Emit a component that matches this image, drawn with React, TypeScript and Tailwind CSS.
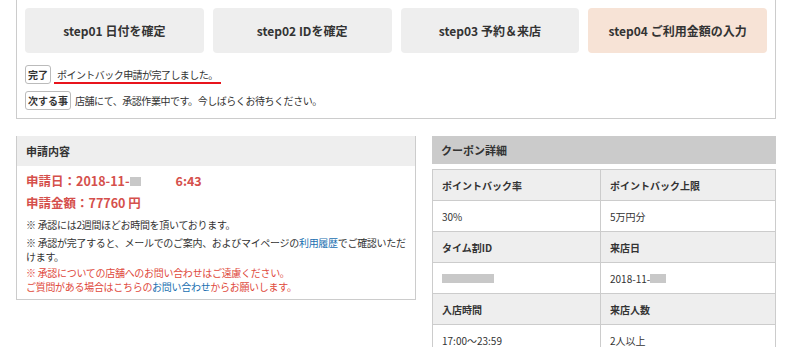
import React from 'react';

const steps = [
  { label: 'step01 日付を確定', active: false },
  { label: 'step02 IDを確定', active: false },
  { label: 'step03 予約＆来店', active: false },
  { label: 'step04 ご利用金額の入力', active: true },
];

const Redacted: React.FC<{ w: string }> = ({ w }) => (
  <span className={`inline-block h-[9px] bg-[#c8c8c8] align-middle ${w}`}></span>
);

const rows: { head: [string, string]; body: [React.ReactNode, React.ReactNode] }[] = [
  { head: ['ポイントバック率', 'ポイントバック上限'], body: ['30%', '5万円分'] },
  {
    head: ['タイム割ID', '来店日'],
    body: [
      <Redacted w="w-[52px]" />,
      <span className="flex items-center">
        2018-11-<Redacted w="w-[16px]" />
      </span>,
    ],
  },
  { head: ['入店時間', '来店人数'], body: ['17:00〜23:59', '2人以上'] },
];

export default function App() {
  return (
    <div
      className="w-[789px] h-[347px] overflow-hidden bg-white text-[#333]"
      style={{ fontFamily: '"Noto Sans CJK JP", "Noto Sans", sans-serif' }}
    >
      <div className="ml-4 w-[760px]">
        {/* Step box */}
        <div className="border-x border-b border-[#cccccc] pt-2 pb-2 px-2">
          <div className="grid grid-cols-4 gap-[9px]">
            {steps.map((s) => (
              <div
                key={s.label}
                className={`h-[45px] rounded-[4px] flex items-center justify-center text-[12px] font-bold ${
                  s.active ? 'bg-[#f7e3d6]' : 'bg-[#eeeeee]'
                }`}
              >
                {s.label}
              </div>
            ))}
          </div>

          <div className="mt-3 flex items-start h-[19px]">
            <span className="h-[19px] px-[2px] border border-[#bbbbbb] rounded-[3px] text-[10px] font-bold leading-[17px]">
              完了
            </span>
            <span className="ml-[3px] px-[3px] pt-[3px] leading-[14px] border-b-2 border-[#e8141c] text-[10px] tracking-[-0.55px]">
              ポイントバック申請が完了しました。
            </span>
          </div>

          <div className="mt-[7px] flex items-center h-[19px]">
            <span className="h-[19px] px-[2px] border border-[#bbbbbb] rounded-[3px] text-[10px] font-bold leading-[17px]">
              次する事
            </span>
            <span className="ml-1 text-[10px] tracking-[-0.45px] leading-[14px]">
              店舗にて、承認作業中です。今しばらくお待ちください。
            </span>
          </div>
        </div>

        {/* Lower panels */}
        <div className="mt-[17px] flex gap-4 items-start">
          {/* Application */}
          <div className="w-[400px] border-x border-b border-[#cccccc]">
            <div className="h-[30px] bg-[#eeeeee] flex items-center px-[9px] text-[11px] font-bold">
              申請内容
            </div>
            <div className="px-[9px] pt-[4px] pb-[5px]">
              <p className="leading-[22px] text-[12.5px] font-bold text-[#d5504c] flex items-center">
                申請日：2018-11-
                <Redacted w="w-[11px]" />
                <span className="ml-[35px]">6:43</span>
              </p>
              <p className="leading-[22px] text-[12.5px] font-bold text-[#d5504c]">申請金額：77760 円</p>
              <div className="text-[10px] leading-[14px] tracking-[-0.3px]">
                <p className="mt-1">※ 承認には2週間ほどお時間を頂いております。</p>
                <p className="mt-1">
                  <span className="block">
                    ※ 承認が完了すると、メールでのご案内、およびマイページの
                    <span className="text-[#1a6fb0]">利用履歴</span>でご確認いただ
                  </span>
                  <span className="block">けます。</span>
                </p>
                <p className="mt-[2px] text-[#e0493c]">
                  <span className="block">※ 承認についての店舗へのお問い合わせはご遠慮ください。</span>
                  <span className="block">
                    ご質問がある場合はこちらの<span className="text-[#1a6fb0]">お問い合わせ</span>からお願いします。
                  </span>
                </p>
              </div>
            </div>
          </div>

          {/* Coupon */}
          <div className="flex-1">
            <div className="h-[28px] bg-[#cbcbcb] flex items-center px-[9px] text-[11px] font-bold">
              クーポン詳細
            </div>
            <div className="mt-[5px] border-t border-l border-[#cccccc] grid grid-cols-[168px_1fr] text-[10px]">
              {rows.map((r, i) => (
                <React.Fragment key={i}>
                  {r.head.map((h) => (
                    <div
                      key={h}
                      className="h-[31px] bg-[#eeeeee] border-r border-b border-[#cccccc] flex items-center px-[9px] font-bold"
                    >
                      {h}
                    </div>
                  ))}
                  {r.body.map((b, j) => (
                    <div
                      key={j}
                      className="h-[31px] bg-white border-r border-b border-[#cccccc] flex items-center px-[9px]"
                    >
                      {b}
                    </div>
                  ))}
                </React.Fragment>
              ))}
            </div>
          </div>
        </div>
      </div>
    </div>
  );
}
